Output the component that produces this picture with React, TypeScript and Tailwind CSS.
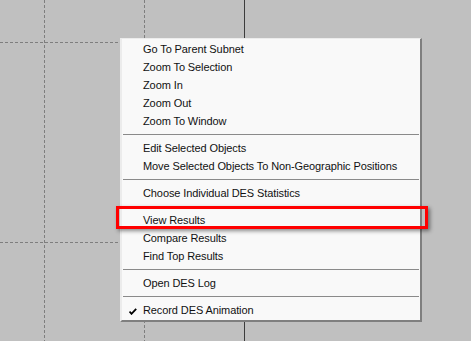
const groups: { label: string; checked?: boolean }[][] = [
  [
    { label: "Go To Parent Subnet" },
    { label: "Zoom To Selection" },
    { label: "Zoom In" },
    { label: "Zoom Out" },
    { label: "Zoom To Window" },
  ],
  [{ label: "Edit Selected Objects" }, { label: "Move Selected Objects To Non-Geographic Positions" }],
  [{ label: "Choose Individual DES Statistics" }],
  [{ label: "View Results" }, { label: "Compare Results" }, { label: "Find Top Results" }],
  [{ label: "Open DES Log" }],
  [{ label: "Record DES Animation", checked: true }],
];

const Check = () => (
  <svg width="8" height="7" viewBox="0 0 8 7" className="absolute left-[7px] top-[7px]">
    <path d="M0.5 3.5 L2.5 5.8 L7.2 0.8" stroke="#000" strokeWidth="1.8" fill="none" />
  </svg>
);

export default function App() {
  return (
    <div className="relative w-[471px] h-[341px] overflow-hidden bg-[#c0c0c0] font-['Liberation_Sans',Arial,sans-serif]">
      {/* canvas grid */}
      <svg width="471" height="341" className="absolute inset-0">
        <line x1="44.5" y1="0" x2="44.5" y2="341" stroke="#7e7e7e" strokeDasharray="3 2" />
        <line x1="144.5" y1="0" x2="144.5" y2="341" stroke="#7e7e7e" strokeDasharray="3 2" />
        <line x1="0" y1="42.5" x2="120" y2="42.5" stroke="#7e7e7e" strokeDasharray="3 2" />
        <line x1="0" y1="242.5" x2="120" y2="242.5" stroke="#7e7e7e" strokeDasharray="3 2" />
        <line x1="244.5" y1="0" x2="244.5" y2="341" stroke="#3c3c3c" />
      </svg>

      {/* context menu */}
      <div className="absolute left-[120px] top-[38px] w-[302px] bg-[#f9f9f9] border-t border-l-2 border-[#ececec] border-r-2 border-r-[#7f7f7f] border-b-2 border-b-[#7f7f7f] pt-[1px] pb-[1px] text-[11px] tracking-[-0.1px] text-[#111]">
        {groups.map((g, gi) => (
          <div key={gi}>
            {gi > 0 && (
              <div className="my-[4px] mx-[1px] h-px bg-[#8a8a8a]" />
            )}
            {g.map((it) => (
              <div key={it.label} className="relative h-[18px] flex items-center pl-[21px] whitespace-nowrap">
                {it.checked && <Check />}
                {it.label}
              </div>
            ))}
          </div>
        ))}
      </div>

      {/* highlight annotation */}
      <div className="absolute left-[116px] top-[206px] w-[312px] h-[23px] border-[3px] border-[#ff0000] shadow-[2px_2px_4px_rgba(0,0,0,0.45)]" />
    </div>
  );
}
